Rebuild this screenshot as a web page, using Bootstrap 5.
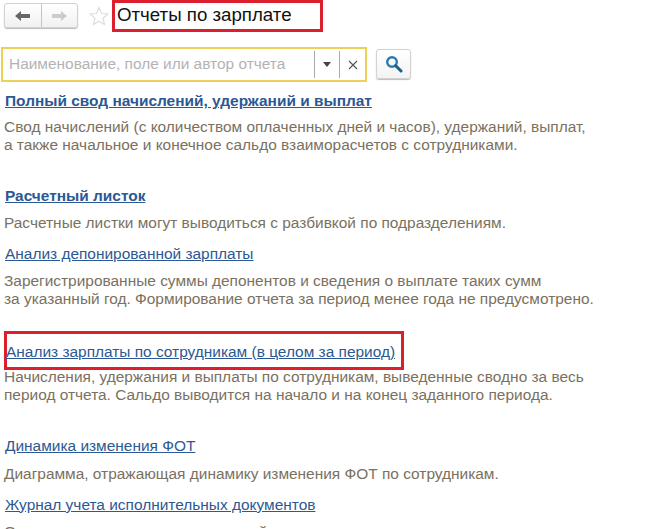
<!DOCTYPE html>
<html lang="ru"><head><meta charset="utf-8">
<link href="https://cdn.jsdelivr.net/npm/bootstrap@5.3.0/dist/css/bootstrap.min.css" rel="stylesheet">
<style>
html,body{height:529px;overflow:hidden}
body{font-family:"Liberation Sans",Arial,sans-serif;background:#fff;color:#7a7160;width:666px}
.topbar{height:33px;padding-left:4px;align-items:flex-start;padding-top:3px}
.navgroup{width:74px;height:25px;border:1px solid #d2d2d2;border-radius:3px;background:linear-gradient(#fff,#f1f1f1);box-shadow:0 1px 1px #bbb;margin-right:11px}
.navgroup>div{flex:1;display:flex;align-items:center;justify-content:center}
.navgroup>div+div{border-left:1px solid #c4c4c4}
.favstar{margin-right:3px;margin-top:3px}
.pagetitle{width:211px;height:32px;margin-top:-3px;border:3px solid #dc1f2c;font-size:18.7px;line-height:24px;color:#111;padding-left:2px}
.searchrow{margin-top:14px;margin-left:1px;align-items:flex-start}
.searchbox{width:366px;height:35px;border:2px solid #eed154;display:flex;align-items:stretch;padding:2px 0;background:#fff}
.searchtext{flex:1;color:#b3b3b3;font-size:15.45px;line-height:26px;padding-left:6px}
.searchbtn{border-left:1px solid #a9a9a9;display:flex;align-items:center;justify-content:center}
.searchbtn.drop{width:25px}.searchbtn.clear{width:26px}
.findbtn{width:35px;height:30px;margin-left:9px;margin-top:2px;border:1px solid #d2d2d2;border-radius:3px;background:linear-gradient(#fff,#f3f3f3);box-shadow:0 1px 1px #bbb;display:flex;align-items:center;justify-content:center}
.reportlist{padding-left:5px;font-size:15.45px}
.replink{display:inline-block;color:#2c5893;text-decoration:underline;line-height:17px}
.repbold{font-weight:700}
.repdesc{margin:0;line-height:18px;margin-left:-1px}
.framed{display:block;width:400px;height:39px;margin-left:-1px;border:3px solid #dc1f2c;padding-top:9px;line-height:18px;text-indent:-1px}
.gap-a{margin-top:10px}.gap-b{margin-top:6px}.gap-b2{margin-top:7px}.gap-c{margin-top:33px}.gap-d{margin-top:7px}.gap-d2{margin-top:8px}.gap-e{margin-top:13px}.gap-f{margin-top:23px}.gap-g{margin-top:-2px}.gap-h{margin-top:33px}.gap-i{margin-top:13px}
</style></head><body>
<div class="d-flex topbar">
 <div class="d-flex navgroup">
  <div><svg width="18" height="12" viewBox="0 0 18 12"><path d="M1 6 7 1V4H16V8H7V11Z" fill="#666"/></svg></div>
  <div><svg width="18" height="12" viewBox="0 0 18 12"><path d="M17 6 11 1V4H2V8H11V11Z" fill="#ccc"/></svg></div>
 </div>
 <svg class="favstar" width="20" height="20" viewBox="0 0 20 20"><path d="M10 1.5 12.5 7.5 18.8 8 14 12.2 15.5 18.5 10 15.2 4.5 18.5 6 12.2 1.2 8 7.5 7.5Z" fill="#fff" stroke="#ddd" stroke-width="1.2"/></svg>
 <div class="pagetitle">Отчеты по зарплате</div>
</div>
<div class="d-flex searchrow">
 <div class="searchbox">
  <div class="searchtext">Наименование, поле или автор отчета</div>
  <div class="searchbtn drop"><svg width="8" height="5" viewBox="0 0 8 5"><path d="M0 0H8L4 5Z" fill="#444"/></svg></div>
  <div class="searchbtn clear"><svg width="10" height="10" viewBox="0 0 10 10"><path d="M1 1 9 9M9 1 1 9" stroke="#555" stroke-width="1.1"/></svg></div>
 </div>
 <div class="findbtn"><svg width="18" height="18" viewBox="0 0 18 18"><circle cx="7" cy="7" r="4.8" fill="none" stroke="#2a7ab0" stroke-width="2.4"/><path d="M10.5 10.5 16 16" stroke="#1f5f90" stroke-width="3" stroke-linecap="round"/></svg></div>
</div>
<div class="reportlist">
 <a class="replink repbold gap-a" href="#">Полный свод начислений, удержаний и выплат</a>
 <p class="repdesc gap-b">Свод начислений (с количеством оплаченных дней и часов), удержаний, выплат,<br>а также начальное и конечное сальдо взаиморасчетов с сотрудниками.</p>
 <a class="replink repbold gap-c" href="#">Расчетный листок</a>
 <p class="repdesc gap-d">Расчетные листки могут выводиться с разбивкой по подразделениям.</p>
 <a class="replink gap-e" href="#">Анализ депонированной зарплаты</a>
 <p class="repdesc gap-b">Зарегистрированные суммы депонентов и сведения о выплате таких сумм<br>за указанный год. Формирование отчета за период менее года не предусмотрено.</p>
 <a class="replink framed gap-f" href="#">Анализ зарплаты по сотрудникам (в целом за период)</a>
 <p class="repdesc gap-g">Начисления, удержания и выплаты по сотрудникам, выведенные сводно за весь<br>период отчета. Сальдо выводится на начало и на конец заданного периода.</p>
 <a class="replink gap-h" href="#">Динамика изменения ФОТ</a>
 <p class="repdesc gap-d2">Диаграмма, отражающая динамику изменения ФОТ по сотрудникам.</p>
 <a class="replink gap-i" href="#">Журнал учета исполнительных документов</a>
 <p class="repdesc gap-d">Отчет содержит сведения о текущей задолженности</p>
</div>
<script src="https://cdn.jsdelivr.net/npm/bootstrap@5.3.0/dist/js/bootstrap.bundle.min.js"></script>
</body></html>
